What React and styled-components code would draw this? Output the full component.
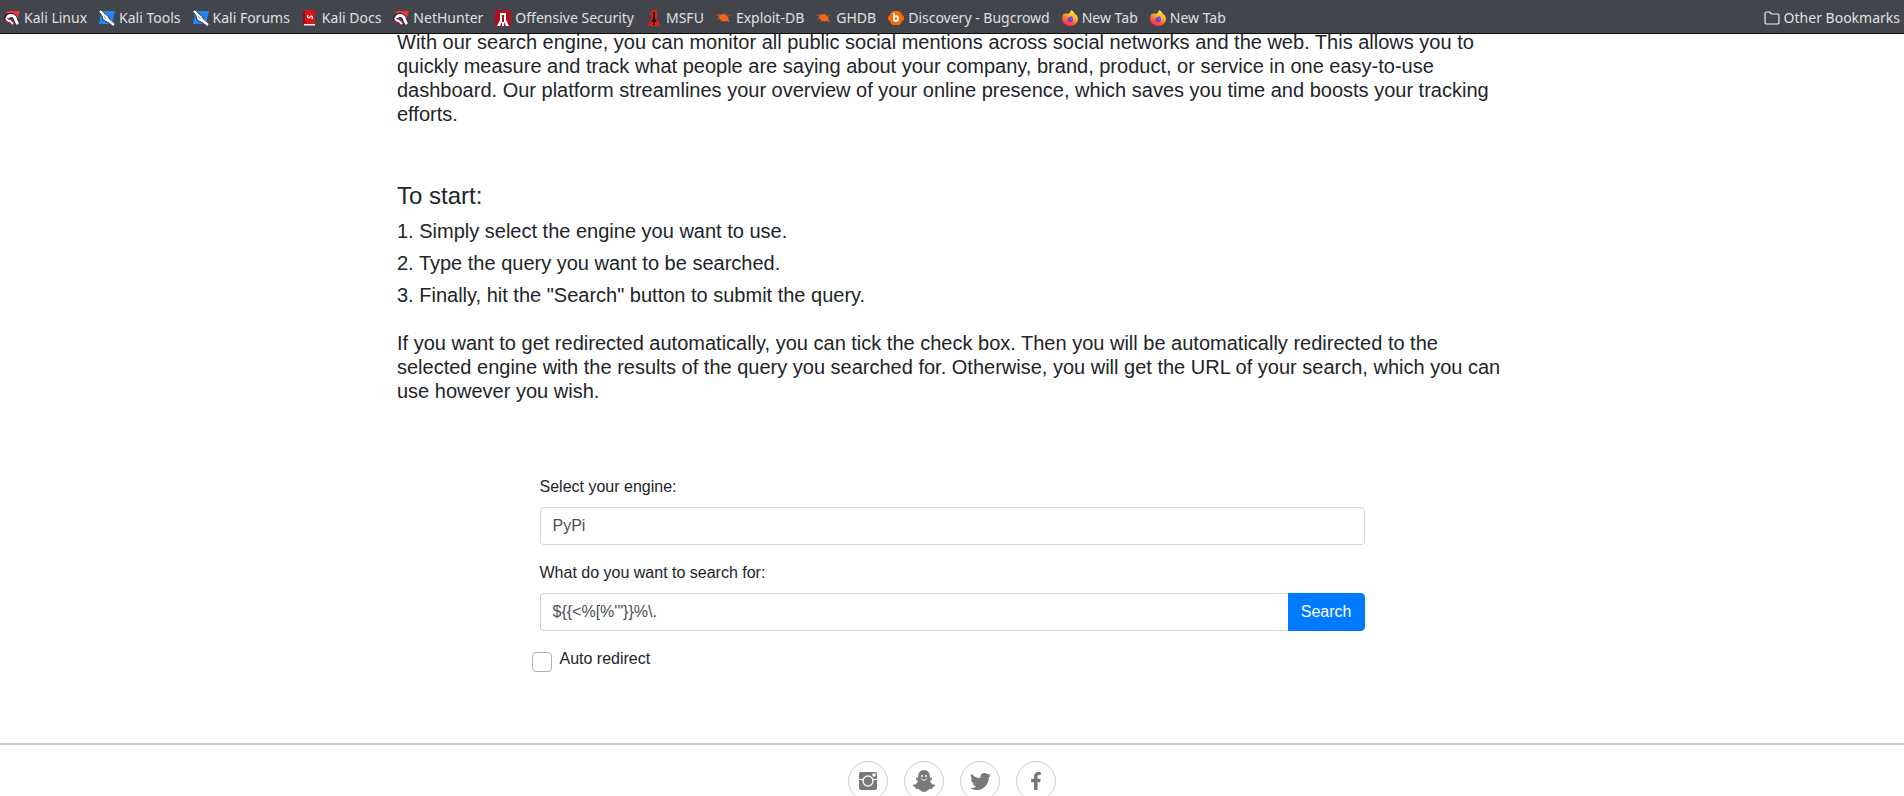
import React from "react";
import styled, { createGlobalStyle } from "styled-components";
import { FaTwitter, FaFacebookF } from "react-icons/fa";

const GlobalStyle = createGlobalStyle`
  *, *::before, *::after { box-sizing: border-box; }
  html { scrollbar-width: none; }
  body {
    margin: 0;
    background: #fff;
    color: #212529;
    font-family: "Liberation Sans", Arial, sans-serif;
    font-size: 16px;
    line-height: 24px;
  }
`;

const BookmarkBar = styled.nav`
  position: sticky;
  top: 0;
  z-index: 1;
  display: flex;
  align-items: center;
  gap: 12px;
  height: 34px;
  padding: 3px 4px 0;
  background: #42454c;
  border-bottom: 1px solid #0c0c0d;
`;

const Bookmark = styled.a`
  display: flex;
  align-items: center;
  gap: 4px;
  margin-left: ${(p) => (p.$end ? "auto" : "0")};
  color: #e0e0e1;
  font-family: "Noto Sans", sans-serif;
  font-size: 14px;
  line-height: 20px;
  white-space: nowrap;
  text-decoration: none;

  svg {
    flex: none;
    width: 16px;
    height: 16px;
  }
`;

const Intro = styled.main`
  max-width: 1110px;
  margin: -4px auto 0;
`;

const Paragraph = styled.p`
  margin: 0;
  font-size: 20px;
  line-height: 24px;
`;

const Heading = styled.h2`
  margin: 55px 0 9px;
  font-size: 24px;
  font-weight: 400;
  line-height: 29px;
`;

const Steps = styled.ol`
  display: grid;
  gap: 8px;
  margin: 0 0 24px;
  padding: 0;
  list-style: none;
  font-size: 20px;
  line-height: 24px;
`;

const SearchForm = styled.form`
  max-width: 825px;
  margin: 72px auto 71px;
`;

const Field = styled.div`
  display: flex;
  flex-direction: column;
  gap: 8px;
  margin-bottom: 16px;
`;

const controlStyle = `
  width: 100%;
  height: 38px;
  padding: 6px 12px;
  border: 1px solid #ced4da;
  border-radius: 4px;
  background: #fff;
  color: #495057;
  font: inherit;
  appearance: none;
`;

const EngineSelect = styled.select`
  ${controlStyle}
`;

const InputGroup = styled.div`
  display: flex;
`;

const QueryInput = styled.input`
  ${controlStyle}
  flex: 1;
  min-width: 0;
  border-right: 0;
  border-radius: 4px 0 0 4px;
`;

const SearchButton = styled.button`
  height: 38px;
  padding: 6px 12px;
  border: 1px solid #007bff;
  border-radius: 0 4px 4px 0;
  background: #007bff;
  color: #fff;
  font: inherit;
`;

const CheckRow = styled.div`
  display: flex;
  align-items: flex-start;
  gap: 8px;
  margin-left: -8px;
`;

const Checkbox = styled.input`
  appearance: none;
  width: 20px;
  height: 20px;
  margin: 5px 0 0;
  border: 1px solid #adb0b3;
  border-radius: 4px;
  background: #fff;

  &:checked { background: #007bff; }
`;

const Footer = styled.footer`
  display: flex;
  justify-content: center;
  gap: 16px;
  padding: 16px 0 24px;
  border-top: 2px solid #ccc;
`;

const SocialLink = styled.a`
  display: flex;
  align-items: center;
  justify-content: center;
  width: 40px;
  height: 40px;
  border: 1px solid #ccc;
  border-radius: 50%;
  color: #77797c;
`;

const Dragon = () => (
  <svg viewBox="0 0 16 16" aria-hidden="true">
    <path d="M3 1h13l-3 10-4-6H2z" fill="#f0333b" />
    <path d="M0 8 2 3h2L2 8l2 5-2-1z" fill="#d01842" />
    <path d="M2 10c0-6 7-6 9-2l3 6" fill="none" stroke="#24272f" strokeWidth="4.600" />
    <path d="M3 9c1-5 7-4 8-1 1 2 1 4 3 6" fill="none" stroke="#fff" strokeWidth="3" />
    <path d="M3 8q0 3 3 4l4 2" fill="none" stroke="#b80c3d" strokeWidth="3.500" />
    <path d="M2 8q1 3 4 3l3 3" fill="none" stroke="#fff" strokeWidth="1.800" />
  </svg>
);

const Dagger = () => (
  <svg viewBox="0 0 16 16" aria-hidden="true">
    <path d="M2 1h14l-3 13H0z" fill="#2484fa" />
    <path d="M0 1h2l7 5 2 4 5 5h-2l-6-3-4-2-1-4z" fill="#fff" stroke="#252e3d" strokeWidth="1" />
    <path d="m1 1 4 4 4 5 6 5" fill="none" stroke="#fff" strokeWidth="2.400" />
    <path d="m5 6 2 3" stroke="#7b8490" strokeWidth=".8" />
  </svg>
);

const Book = () => (
  <svg viewBox="0 0 16 16" aria-hidden="true">
    <path d="M2 0h11v15H3q-2 0-1-2z" fill="#d4151a" />
    <path d="M1 1h2v12H1z" fill="#8b0d12" />
    <path d="M2 14h11v1.5H2z" fill="#eee" />
    <path d="M6 5q-1 3 1 3 1 0 1-1t1-1q2 0 1 3M5 7h1m4 0h1" fill="none" stroke="#fff" strokeWidth="1.200" />
  </svg>
);

const Offensive = () => (
  <svg viewBox="0 0 16 16" aria-hidden="true">
    <path d="M0 0h16v16H0z" fill="#af0d20" />
    <path d="M5 3h6v7l3 6h-3l-2-4V5H7v7l-2 4H2l3-6zM7 12h2v4H7z" fill="#fff" />
  </svg>
);

const Msfu = () => (
  <svg viewBox="0 0 16 16" aria-hidden="true">
    <path d="M5 0h6v8l3 8H2l3-8z" fill="#e21a1d" />
    <path d="M7 2h2v7l2 2-2 1v3H7v-3l-2-1 2-2z" fill="#2b1013" />
  </svg>
);

const Bug = () => (
  <svg viewBox="0 0 16 16" aria-hidden="true">
    <path d="m1 4 4 1c2-2 5-1 6 1l2 2-1 1 2 3-3-1c-3 1-6 0-7-2L2 7l2-1z" fill="#ef671c" />
    <path d="m4 6-4-1m4 3-3 2m5 0-2 2m5-8 1-1m1 3 4-1m-4 4 2 3" stroke="#ce5920" strokeWidth=".7" />
  </svg>
);

const Bugcrowd = () => (
  <svg viewBox="0 0 16 16" aria-hidden="true">
    <path d="M5 1h6q1 0 2 2l3 4v2l-3 4q-1 2-2 2H5q-1 0-2-2L0 9V7l3-4q1-2 2-2z" fill="#ff6900" />
    <path d="M6 3v8m0-3q0-2 2-2t2 2.500-2 2.500-2-2" fill="none" stroke="#fff" strokeWidth="1.800" />
  </svg>
);

const Firefox = () => (
  <svg viewBox="0 0 16 16" aria-hidden="true">
    <defs>
      <linearGradient id="flame" x1=".8" y1="0" x2=".3" y2="1">
        <stop offset="0" stopColor="#fff44f" />
        <stop offset=".4" stopColor="#ffb52a" />
        <stop offset=".7" stopColor="#ff613c" />
        <stop offset="1" stopColor="#f51b65" />
      </linearGradient>
    </defs>
    <path d="M2 3q0 1 1 1l2-1v1q3 0 4-4 4 2 4 5l1-1q2 3 2 5a8 7 0 0 1-16 0q0-3 2-6z" fill="url(#flame)" />
    <circle cx="8" cy="9" r="3" fill="#8350ee" />
    <path d="M4 6q2 2 5 1-2 2 0 4 1 0 2-1-1 3-4 2-3-2-3-6z" fill="#6535c7" />
    <path d="M3 5q2-1 3 1h3q0 1-3 2-1 2 1 3-3-1-4-6z" fill="#ff9230" />
  </svg>
);

const Folder = () => (
  <svg viewBox="0 0 16 16" fill="none" stroke="#f0f0f1" strokeWidth="1.200" strokeLinejoin="round" aria-hidden="true">
    <path d="M1 3.500q0-1.500 1.500-1.500h3L7.500 4h6q1.500 0 1.500 1.500v7q0 1.500-1.500 1.500h-11Q1 14 1 12.500z" />
  </svg>
);

const Instagram = () => (
  <svg width="18" height="18" viewBox="0 0 18 18" aria-hidden="true">
    <rect width="18" height="18" rx="2" fill="currentColor" />
    <path d="M0 7.500h18" stroke="#fff" />
    <circle cx="9" cy="9" r="5" fill="currentColor" stroke="#fff" strokeWidth="1.300" />
    <circle cx="15" cy="3" r="1.800" fill="#fff" />
  </svg>
);

const Snapchat = () => (
  <svg width="24" height="22" viewBox="0 0 24 22" aria-hidden="true">
    <path d="M6 8c0-5 2-8 6-8s6 3 6 8q2-1 2 .5T18 11q1 3 5 4 1 1-2 2l-1 2q-3-.5-4 1-2 2-4 2t-4-2q-1-1.500-4-1l-1-2q-3-1-2-2 4-1 5-4-2-1-2-2.500T6 8z" fill="currentColor" />
    <ellipse cx="10" cy="6" rx=".8" ry="1.300" fill="#fff" />
    <ellipse cx="14" cy="6" rx=".8" ry="1.300" fill="#fff" />
    <path d="M9 8.500q3 3.500 6 0" fill="none" stroke="#fff" />
  </svg>
);

const bookmarks = [
  ["Kali Linux", Dragon],
  ["Kali Tools", Dagger],
  ["Kali Forums", Dagger],
  ["Kali Docs", Book],
  ["NetHunter", Dragon],
  ["Offensive Security", Offensive],
  ["MSFU", Msfu],
  ["Exploit-DB", Bug],
  ["GHDB", Bug],
  ["Discovery - Bugcrowd", Bugcrowd],
  ["New Tab", Firefox],
  ["New Tab", Firefox],
];

export default function App() {
  return (
    <>
      <GlobalStyle />
      <BookmarkBar aria-label="Bookmarks">
        {bookmarks.map(([name, Icon], i) => (
          <Bookmark href="#" key={i}>
            <Icon />
            {name}
          </Bookmark>
        ))}
        <Bookmark href="#" $end>
          <Folder />
          Other Bookmarks
        </Bookmark>
      </BookmarkBar>
      <Intro>
        <Paragraph>
          With our search engine, you can monitor all public social mentions across social networks and the web. This
          allows you to quickly measure and track what people are saying about your company, brand, product, or service
          in one easy-to-use dashboard. Our platform streamlines your overview of your online presence, which saves you
          time and boosts your tracking efforts.
        </Paragraph>
        <Heading>To start:</Heading>
        <Steps>
          <li>1. Simply select the engine you want to use.</li>
          <li>2. Type the query you want to be searched.</li>
          <li>3. Finally, hit the "Search" button to submit the query.</li>
        </Steps>
        <Paragraph>
          If you want to get redirected automatically, you can tick the check box. Then you will be automatically
          redirected to the selected engine with the results of the query you searched for. Otherwise, you will get the
          URL of your search, which you can use however you wish.
        </Paragraph>
        <SearchForm onSubmit={(e) => e.preventDefault()}>
          <Field>
            <label htmlFor="engine">Select your engine:</label>
            <EngineSelect id="engine">
              <option>PyPi</option>
            </EngineSelect>
          </Field>
          <Field>
            <label htmlFor="query">What do you want to search for:</label>
            <InputGroup>
              <QueryInput id="query" type="text" defaultValue={"${{<%[%'\"}}%\\."} />
              <SearchButton type="submit">Search</SearchButton>
            </InputGroup>
          </Field>
          <CheckRow>
            <Checkbox id="redirect" type="checkbox" />
            <label htmlFor="redirect">Auto redirect</label>
          </CheckRow>
        </SearchForm>
      </Intro>
      <Footer>
        <SocialLink href="#" aria-label="Instagram"><Instagram /></SocialLink>
        <SocialLink href="#" aria-label="Snapchat"><Snapchat /></SocialLink>
        <SocialLink href="#" aria-label="Twitter"><FaTwitter size={21} /></SocialLink>
        <SocialLink href="#" aria-label="Facebook"><FaFacebookF size={18} /></SocialLink>
      </Footer>
    </>
  );
}
